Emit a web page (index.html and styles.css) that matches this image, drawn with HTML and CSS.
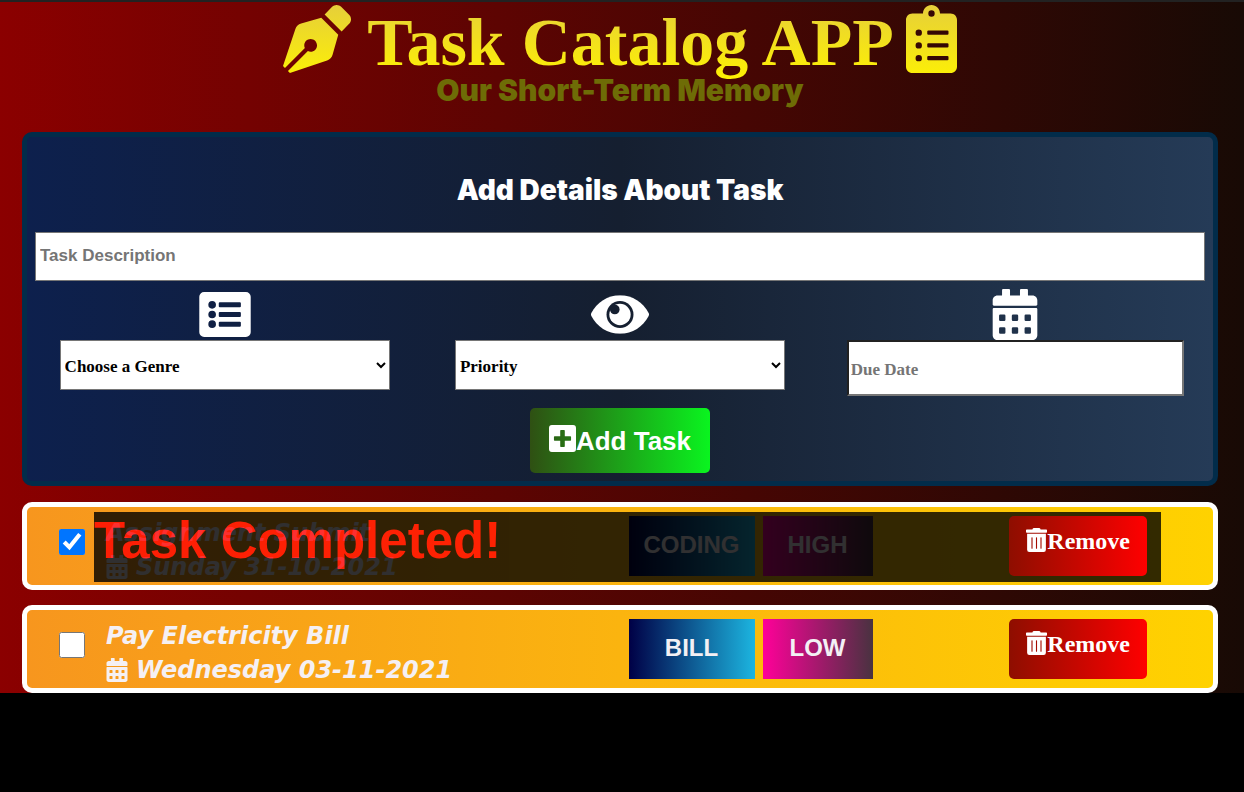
FILE: index.html
```
<!DOCTYPE html>
<html lang="en">
<head>
<meta charset="utf-8">
<title>Task Catalog APP</title>
<link rel="stylesheet" href="styles.css">
</head>
<body>
<svg class="sprite" aria-hidden="true">
  <defs>
    <linearGradient id="gold" x1="0" y1="0" x2="0" y2="1">
      <stop offset="0" stop-color="#e6cf3a"/>
      <stop offset="1" stop-color="#fbee08"/>
    </linearGradient>
  </defs>
  <symbol id="calendar" viewBox="0 0 448 512">
    <path fill-rule="evenodd" d="M436 168H12c-6.600 0-12-5.400-12-12v-44c0-26.500 21.500-48 48-48h46V12c0-6.600 5.400-12 12-12h56c6.600 0 12 5.400 12 12v52h100V12c0-6.600 5.400-12 12-12h56c6.600 0 12 5.400 12 12v52h46c26.500 0 48 21.500 48 48v44c0 6.600-5.400 12-12 12zM12 190h424c6.600 0 12 5.400 12 12v262c0 26.500-21.500 48-48 48H48c-26.500 0-48-21.500-48-48V202c0-6.600 5.400-12 12-12zM76 256a12 12 0 0 0-12 12v40a12 12 0 0 0 12 12h40a12 12 0 0 0 12-12v-40a12 12 0 0 0-12-12zM204 256a12 12 0 0 0-12 12v40a12 12 0 0 0 12 12h40a12 12 0 0 0 12-12v-40a12 12 0 0 0-12-12zM332 256a12 12 0 0 0-12 12v40a12 12 0 0 0 12 12h40a12 12 0 0 0 12-12v-40a12 12 0 0 0-12-12zM76 384a12 12 0 0 0-12 12v40a12 12 0 0 0 12 12h40a12 12 0 0 0 12-12v-40a12 12 0 0 0-12-12zM204 384a12 12 0 0 0-12 12v40a12 12 0 0 0 12 12h40a12 12 0 0 0 12-12v-40a12 12 0 0 0-12-12zM332 384a12 12 0 0 0-12 12v40a12 12 0 0 0 12 12h40a12 12 0 0 0 12-12v-40a12 12 0 0 0-12-12z"/>
  </symbol>
  <symbol id="trash" viewBox="0 0 448 512">
    <path d="M24 464a48 48 0 0 0 48 48h304a48 48 0 0 0 48-48V122H24zm284-256a12 12 0 0 1 24 0v224a12 12 0 0 1-24 0zm-96 0a12 12 0 0 1 24 0v224a12 12 0 0 1-24 0zm-96 0a12 12 0 0 1 24 0v224a12 12 0 0 1-24 0zM432 32H312l-9.400-18.700A24 24 0 0 0 281.100 0H166.800a23.720 23.720 0 0 0-21.400 13.300L136 32H16A16 16 0 0 0 0 48v38a16 16 0 0 0 16 16h416a16 16 0 0 0 16-16V48a16 16 0 0 0-16-16z"/>
  </symbol>
</svg>

<main class="page">
  <header class="header">
    <h1 class="title">
      <svg class="title-icon" viewBox="0 0 512 512" aria-hidden="true"><path fill="url(#gold)" d="M136.600 138.790a64.003 64.003 0 0 0-43.310 41.350L0 460l14.690 14.690L164.800 324.580c-2.990-6.260-4.800-13.180-4.800-20.580 0-26.510 21.490-48 48-48s48 21.490 48 48-21.490 48-48 48c-7.400 0-14.320-1.810-20.580-4.800L37.310 497.310 52 512l279.860-93.290a64.003 64.003 0 0 0 41.350-43.310L416 224 288 96l-151.400 42.790zm361.340-64.620l-60.110-60.110c-18.750-18.750-49.160-18.750-67.910 0l-56.550 56.550 128.020 128.020 56.550-56.550c18.750-18.750 18.750-49.150 0-67.910z"/></svg>
      <span class="title-text">Task Catalog APP</span>
      <svg class="title-icon title-icon-narrow" viewBox="0 0 384 512" aria-hidden="true"><path fill="url(#gold)" fill-rule="evenodd" d="M336 64h-80c0-35.300-28.700-64-64-64s-64 28.700-64 64H48C21.500 64 0 85.500 0 112v352c0 26.500 21.500 48 48 48h288c26.500 0 48-21.500 48-48V112c0-26.500-21.500-48-48-48zM192 40a24 24 0 1 1 0 48a24 24 0 1 1 0-48zM96 184a24 24 0 1 1 0 48a24 24 0 1 1 0-48zM96 280a24 24 0 1 1 0 48a24 24 0 1 1 0-48zM96 376a24 24 0 1 1 0 48a24 24 0 1 1 0-48zM168 192h144a8 8 0 0 1 8 8v16a8 8 0 0 1-8 8H168a8 8 0 0 1-8-8v-16a8 8 0 0 1 8-8zM168 288h144a8 8 0 0 1 8 8v16a8 8 0 0 1-8 8H168a8 8 0 0 1-8-8v-16a8 8 0 0 1 8-8zM168 384h144a8 8 0 0 1 8 8v16a8 8 0 0 1-8 8H168a8 8 0 0 1-8-8v-16a8 8 0 0 1 8-8z"/></svg>
    </h1>
    <p class="subtitle">Our Short-Term Memory</p>
  </header>

  <form class="form">
    <h2 class="form-title">Add Details About Task</h2>
    <input class="description" type="text" placeholder="Task Description" aria-label="Task Description">
    <div class="fields">
      <div class="field">
        <label class="field-label" for="genre" aria-label="Genre">
          <svg class="icon-list" viewBox="0 0 512 448" aria-hidden="true"><path fill-rule="evenodd" d="M48 0h416a48 48 0 0 1 48 48v352a48 48 0 0 1-48 48H48a48 48 0 0 1-48-48V48A48 48 0 0 1 48 0zM128 90a38 38 0 1 0 0 76a38 38 0 1 0 0-76zM128 186a38 38 0 1 0 0 76a38 38 0 1 0 0-76zM128 282a38 38 0 1 0 0 76a38 38 0 1 0 0-76zM204 103a10 10 0 0 0-10 10v30a10 10 0 0 0 10 10h200a10 10 0 0 0 10-10v-30a10 10 0 0 0-10-10zM204 199a10 10 0 0 0-10 10v30a10 10 0 0 0 10 10h200a10 10 0 0 0 10-10v-30a10 10 0 0 0-10-10zM204 295a10 10 0 0 0-10 10v30a10 10 0 0 0 10 10h200a10 10 0 0 0 10-10v-30a10 10 0 0 0-10-10z"/></svg>
        </label>
        <select class="control" id="genre"><option>Choose a Genre</option><option>Coding</option><option>Bill</option></select>
      </div>
      <div class="field">
        <label class="field-label" for="priority" aria-label="Priority">
          <svg class="icon-eye" viewBox="0 64 576 384" aria-hidden="true">
            <mask id="iris"><rect y="64" width="576" height="384" fill="#fff"/><circle cx="288" cy="256" r="134" fill="#000"/><circle cx="288" cy="256" r="106" fill="#fff"/><circle cx="236" cy="206" r="48" fill="#000"/></mask>
            <path mask="url(#iris)" d="M572.520 241.400C518.290 135.590 410.930 64 288 64S57.680 135.640 3.480 241.410a32.350 32.350 0 0 0 0 29.190C57.710 376.410 165.070 448 288 448s230.320-71.640 284.520-177.410a32.350 32.350 0 0 0 0-29.190z"/>
          </svg>
        </label>
        <select class="control" id="priority"><option>Priority</option><option>High</option><option>Low</option></select>
      </div>
      <div class="field">
        <label class="field-label" for="due" aria-label="Due Date">
          <svg class="icon-calendar" aria-hidden="true"><use href="#calendar"/></svg>
        </label>
        <input class="control control-date" id="due" type="text" placeholder="Due Date">
      </div>
    </div>
    <button class="add" type="button">
      <svg class="icon-plus" viewBox="0 0 448 448" aria-hidden="true"><path fill-rule="evenodd" d="M48 0h352a48 48 0 0 1 48 48v352a48 48 0 0 1-48 48H48a48 48 0 0 1-48-48V48A48 48 0 0 1 48 0zM198 82a12 12 0 0 0-12 12v92H94a12 12 0 0 0-12 12v52a12 12 0 0 0 12 12h92v92a12 12 0 0 0 12 12h52a12 12 0 0 0 12-12V262h92a12 12 0 0 0 12-12v-52a12 12 0 0 0-12-12H262V94a12 12 0 0 0-12-12z"/></svg>Add Task
    </button>
  </form>

  <ul class="tasks">
    <li class="task">
      <input class="check" type="checkbox" checked aria-label="Assignment Submit done">
      <div class="task-body">
        <div class="info">
          <h3 class="task-name">Assignment Submit</h3>
          <p class="task-date"><svg class="icon-date" aria-hidden="true"><use href="#calendar"/></svg>Sunday 31-10-2021</p>
        </div>
        <div class="meta">
          <span class="badge badge-genre">CODING</span>
          <span class="badge badge-priority">HIGH</span>
          <button class="remove" type="button"><svg class="icon-trash" aria-hidden="true"><use href="#trash"/></svg>Remove</button>
        </div>
        <div class="completed">Task Completed!</div>
      </div>
    </li>
    <li class="task">
      <input class="check" type="checkbox" aria-label="Pay Electricity Bill done">
      <div class="task-body">
        <div class="info">
          <h3 class="task-name">Pay Electricity Bill</h3>
          <p class="task-date"><svg class="icon-date" aria-hidden="true"><use href="#calendar"/></svg>Wednesday 03-11-2021</p>
        </div>
        <div class="meta">
          <span class="badge badge-genre">BILL</span>
          <span class="badge badge-priority">LOW</span>
          <button class="remove" type="button"><svg class="icon-trash" aria-hidden="true"><use href="#trash"/></svg>Remove</button>
        </div>
      </div>
    </li>
  </ul>
</main>
</body>
</html>
```
FILE: styles.css
```
* { box-sizing: border-box; }

html { background: #000; }

body {
  margin: 0;
  border-top: 2px solid #222;
  font-family: "Liberation Sans", Arial, sans-serif;
}

h1, h2, h3, p, ul { margin: 0; padding: 0; }

svg { display: block; fill: currentColor; flex: none; }

.sprite { position: absolute; width: 0; height: 0; }

.page {
  padding: 0 26px 0 22px;
  background: linear-gradient(to right, #8b0000, #180a05);
}

/* Header */
.header { padding-bottom: 26px; text-align: center; }

.title {
  display: flex;
  justify-content: center;
  align-items: flex-start;
  gap: 12px;
  font: bold 68px/80px "Liberation Serif", "Times New Roman", serif;
}

.title-icon { width: 68px; height: 68px; margin-top: 3px; }
.title-icon-narrow { width: 51px; }

.title-text {
  padding-left: 4px;
  color: transparent;
  background: linear-gradient(#e6cf3a, #fff200);
  background-clip: text;
  -webkit-background-clip: text;
}

.subtitle {
  margin-top: -8px;
  font: 900 30px/32px Inter, "Arial Black", sans-serif;
  color: #6e6c06;
}

/* Form */
.form {
  padding: 0 0 8px;
  border: 5px solid #022c4a;
  border-radius: 10px;
  background: linear-gradient(to right, #0d204d, #151f30 50%, #253b57);
  display: flex;
  flex-direction: column;
  align-items: center;
  color: #fff;
}

.form-title {
  padding: 37px 0 26px;
  font: 900 28px/32px Inter, "Arial Black", sans-serif;
}

.description {
  width: calc(100% - 16px);
  height: 49px;
  padding: 0 4px 2px;
  border: 1px solid #767676;
  font: bold 17px/20px "Liberation Sans", Arial, sans-serif;
}

.fields {
  width: 100%;
  margin-top: 8px;
  display: grid;
  grid-template-columns: repeat(3, 1fr);
}

.field { display: flex; flex-direction: column; align-items: center; }

.field-label { height: 51px; display: flex; align-items: center; }

.icon-list { width: 52px; height: 45px; }
.icon-eye { width: 58px; height: 39px; }
.icon-calendar { width: 46px; height: 51px; }

.control {
  width: 83.5%;
  height: 50px;
  border: 1px solid #767676;
  border-radius: 0;
  background-color: #fff;
  color: #000;
  font: bold 17px/20px "Liberation Serif", "Times New Roman", serif;
}

select.control { padding: 2px 0 0; }

.control-date {
  width: calc(83.5% + 7px);
  height: 56px;
  padding: 4px 2px 0;
  border: 2px inset #767676;
}

::placeholder { color: #757575; }

.add {
  margin-top: 12px;
  padding: 17px 19px 16px;
  display: flex;
  align-items: center;
  border: 0;
  border-radius: 5px;
  background: linear-gradient(to right, #2f5013, #0af41f);
  color: #fff;
  font: bold 26px/32px "Liberation Sans", Arial, sans-serif;
}

.icon-plus { width: 27px; height: 27px; margin-bottom: 5px; }

/* Tasks */
.tasks {
  margin-top: 16px;
  display: grid;
  gap: 15px;
  list-style: none;
}

.task {
  padding: 5px 52px 1px 32px;
  display: flex;
  align-items: flex-start;
  gap: 9px;
  border: 5px solid #fff;
  border-radius: 10px;
  background: linear-gradient(to right, #f7961e, #ffd200);
}

.check { width: 26px; height: 26px; margin: 17px 0 0; flex: none; }

.task-body {
  position: relative;
  flex: 1;
  padding: 4px 14px 0 12px;
  display: flex;
}

.info {
  flex: 1;
  color: #f5f0f3;
  font: italic bold 24px/34px "DejaVu Sans", Verdana, sans-serif;
}

.task-name { font: inherit; }

.task-date { display: flex; align-items: center; gap: 8px; }

.icon-date { width: 22px; height: 24px; }

.meta {
  width: calc(50% - 2px);
  display: flex;
  align-items: flex-start;
  gap: 8px;
}

.badge {
  padding-bottom: 2px;
  color: #f3f0f4;
  font: bold 24px/58px "Liberation Sans", Arial, sans-serif;
  text-align: center;
}

.badge-genre { width: 126px; background: linear-gradient(to right, #000046, #1cb5e0); }
.badge-priority { width: 110px; background: linear-gradient(to right, #ff0099, #493240); }

.remove {
  position: relative;
  z-index: 2;
  margin-left: auto;
  height: 60px;
  padding: 12px 17px;
  display: flex;
  align-items: flex-start;
  border: 0;
  border-radius: 5px;
  background: linear-gradient(to right, #8e0e00, #ff0000);
  color: #fff;
  font: bold 24px/26px "Liberation Serif", "Times New Roman", serif;
}

.icon-trash { width: 21px; height: 24px; }

/* Veil over a finished task */
.completed {
  position: absolute;
  inset: 0 0 2px;
  z-index: 1;
  background: #000;
  color: #f00;
  opacity: 0.8;
  font: bold 51px/58px "Liberation Sans", Arial, sans-serif;
}
```
